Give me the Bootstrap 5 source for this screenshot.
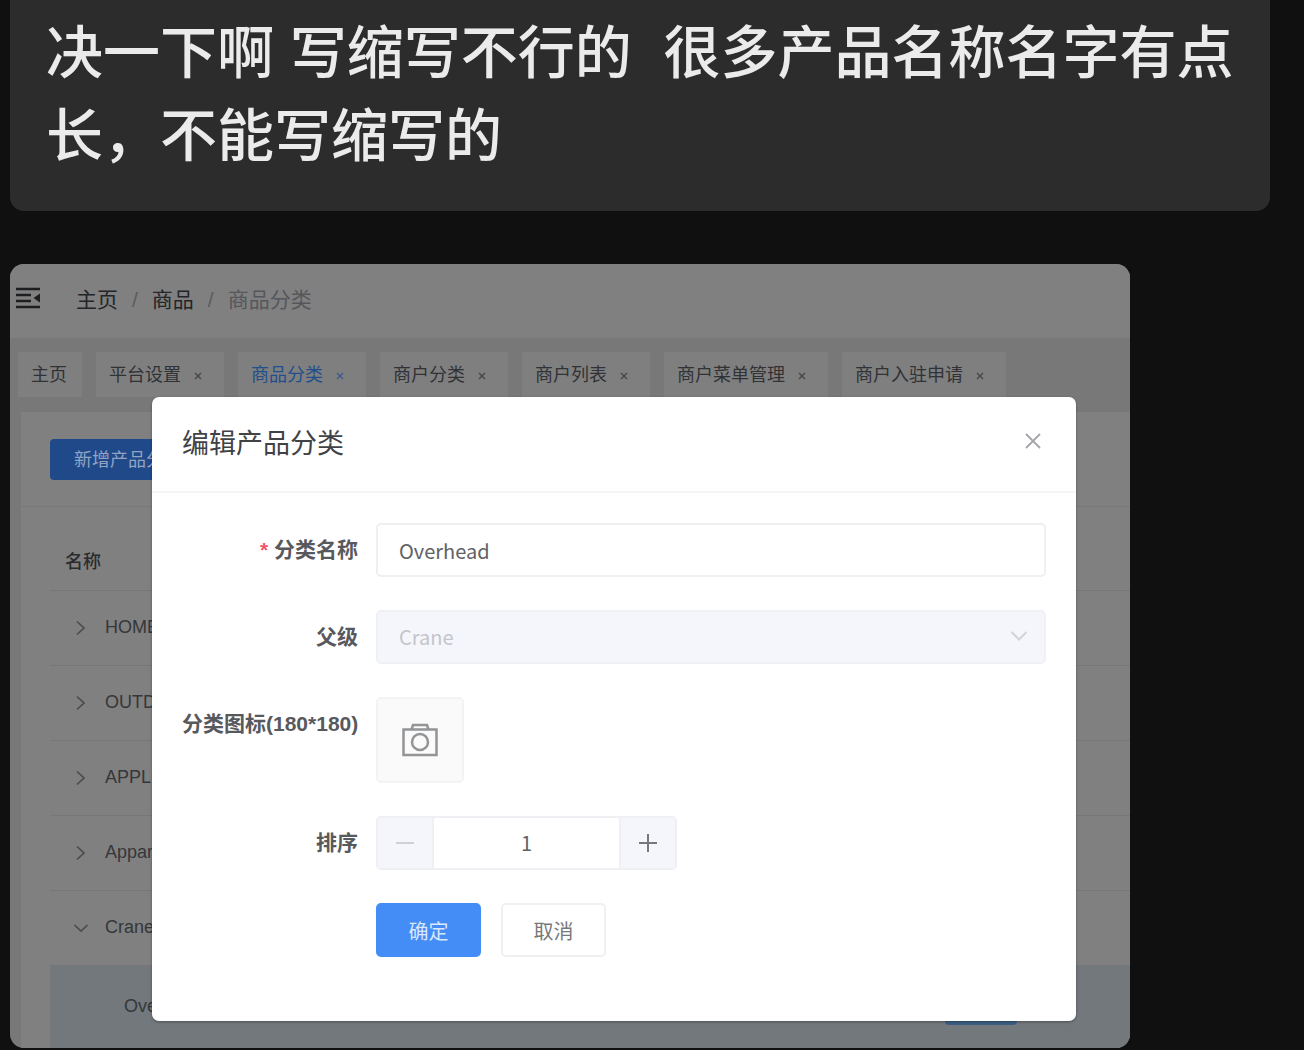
<!DOCTYPE html>
<html lang="zh-CN">
<head>
<meta charset="utf-8">
<meta name="viewport" content="width=device-width, initial-scale=1">
<title>编辑产品分类</title>
<link href="https://cdn.jsdelivr.net/npm/bootstrap@5.3.0/dist/css/bootstrap.min.css" rel="stylesheet">
<script src="https://cdn.jsdelivr.net/npm/bootstrap@5.3.0/dist/js/bootstrap.bundle.min.js"></script>
<style>
  body { background: #101010; font-family: "Liberation Sans", "Noto Sans CJK SC", sans-serif; color: #303133; }
  .chat { padding: 0 34px 2px 10px; }
  .bubble { background: #2c2c2c; color: #ebebeb; border-radius: 0 0 14px 14px; padding: 12px 36px 33px; margin-bottom: 53px; font-size: 57px; line-height: 83px; font-weight: 500; white-space: pre; }
  .shot { margin-right: 140px; border-radius: 14px; background: #787878; color: #2c2d30; overflow: hidden; }
  .shot-head { height: 74px; background: #808080; padding: 0 5px 2px; }
  .shot-head .breadcrumb { margin: 0 0 0 35px; font-size: 21px; line-height: 30px; --bs-breadcrumb-item-padding-x: 14px; --bs-breadcrumb-divider-color: #5b5c5f; }
  .shot-head a { color: #242528; text-decoration: none; }
  .shot-head .breadcrumb-item.active { color: #55575c; }
  .tabs { padding: 14px 8px 15px; gap: 14px; font-size: 18px; line-height: 27px; }
  .tab { background: #7f7f7f; height: 45px; padding: 2px 15px 0 13px; color: #303236; text-decoration: none; white-space: nowrap; }
  .tab svg { margin: 0 7px 0 13px; }
  .tab.current { color: #214f8c; }
  .panel { background: #808080; margin-left: 11px; }
  .panel-bar { padding: 27px 29px 26px; border-bottom: 1px solid #787878; }
  .btn-add { background: #20498a; color: #91a4c2; border: 0; border-radius: 4px; font-size: 18px; line-height: 27px; padding: 8px 24px 6px; }
  .panel-body { padding-left: 29px; }
  .cats { --bs-table-bg: transparent; --bs-table-color: #35373a; font-size: 18px; line-height: 27px; border-color: #777779; }
  .cats th { height: 83px; padding: 29px 15px 0; font-weight: 500; color: #2b2c2e; vertical-align: middle; }
  .cats td { height: 75px; padding: 0 23px; vertical-align: middle; }
  .cats td svg { margin-right: 16px; color: #4a4b4e; }
  .cats .picked td { background: #73787d; height: 83px; border: 0; }
  .cats .picked td:first-child { padding-left: 74px; }
  .cats td:last-child { width: 208px; }
  .btn-row { background: #3d5f83; border: 0; border-radius: 4px; width: 72px; height: 36px; }
  .dialog { position: absolute; top: 133px; left: 142px; right: 194px; background: #fff; border-radius: 7px; box-shadow: 0 1px 3px #0005; }
  .dialog-head { padding: 0 30px; height: 96px; border-bottom: 2px solid #f5f5f6; }
  .dialog-head h1 { font-size: 27px; line-height: 40px; font-weight: 400; color: #414246; margin: 0; }
  .btn-x { border: 0; background: none; padding: 3px 5px 9px; display: flex; }
  .dialog-form { padding: 30px 30px 64px; gap: 33px; font-size: 21px; }
  .line { gap: 18px; }
  .tag { width: 176px; text-align: right; font-weight: 700; color: #58595d; line-height: 54px; white-space: nowrap; flex: none; }
  .tag i { color: #f2566a; font-style: normal; }
  .latin { font-family: "Noto Sans CJK SC", sans-serif; font-size: 20px; }
  .field { height: 54px; border: 2px solid #efeff1; border-radius: 5px; padding: 0 21px; color: #606266; }
  .field:disabled { background-color: #f5f6fb; color: #c3c5ca; border-color: #f0f1f5; opacity: 1; }
  select.field { background-image: none; }
  .caret { position: absolute; right: 18px; top: 20px; }
  .upload { width: 88px; height: 86px; background: #fafafa; border: 2px solid #f3f3f4; border-radius: 5px; padding: 0; }
  .stepper { width: 301px; height: 54px; border: 2px solid #efeff4; border-radius: 5px; overflow: hidden; }
  .stepper button { width: 54px; background: #f5f6fb; border: 0; padding: 0 0 4px; }
  .stepper input { border: 0; border-left: 2px solid #efeff4; border-right: 2px solid #efeff4; text-align: center; min-width: 0; flex: 1; color: #606266; }
  .act { width: 105px; height: 54px; border-radius: 5px; font-size: 20px; padding: 3px 0 0; border: 2px solid #f0f0f1; color: #77787c; background: #fff; }
  .act.ok { background: #448cf6; border-color: #448cf6; color: #d9e8ff; }
  .spacer { width: 176px; flex: none; }
</style>
</head>
<body>
<svg width="0" height="0" class="position-absolute" aria-hidden="true">
  <symbol id="x" viewBox="0 0 8 8"><path d="M1 1l6 6M7 1L1 7" stroke="currentColor" stroke-width="1.3" opacity=".75"/></symbol>
  <symbol id="right" viewBox="0 0 16 16"><path d="M4 1.500l7 6.500-7 6.500" fill="none" stroke="currentColor" stroke-width="1.700"/></symbol>
  <symbol id="down" viewBox="0 0 16 16"><path d="M1.500 5L8 11l6.500-6" fill="none" stroke="currentColor" stroke-width="1.700"/></symbol>
</svg>
<main class="chat">
  <div class="bubble">决一下啊 写缩写不行的  很多产品名称名字有点<br>长，不能写缩写的</div>

  <div class="position-relative">
    <section class="shot">
      <header class="shot-head d-flex align-items-center">
        <svg width="26" height="24" viewBox="0 0 26 24" class="mb-1" aria-hidden="true"><path d="M1 3h24M1 9h15M1 15h15M1 21h24" stroke="#1d1e20" stroke-width="2.500"/><path d="M25 7.500v9L18.500 12z" fill="#1d1e20"/></svg>
        <nav aria-label="breadcrumb">
          <ol class="breadcrumb">
            <li class="breadcrumb-item"><a href="#">主页</a></li>
            <li class="breadcrumb-item"><a href="#">商品</a></li>
            <li class="breadcrumb-item active">商品分类</li>
          </ol>
        </nav>
      </header>
      <nav class="tabs d-flex">
        <a class="tab d-flex align-items-center" href="#">主页</a>
        <a class="tab d-flex align-items-center" href="#">平台设置<svg width="8" height="8"><use href="#x"/></svg></a>
        <a class="tab current d-flex align-items-center" href="#">商品分类<svg width="8" height="8"><use href="#x"/></svg></a>
        <a class="tab d-flex align-items-center" href="#">商户分类<svg width="8" height="8"><use href="#x"/></svg></a>
        <a class="tab d-flex align-items-center" href="#">商户列表<svg width="8" height="8"><use href="#x"/></svg></a>
        <a class="tab d-flex align-items-center" href="#">商户菜单管理<svg width="8" height="8"><use href="#x"/></svg></a>
        <a class="tab d-flex align-items-center" href="#">商户入驻申请<svg width="8" height="8"><use href="#x"/></svg></a>
      </nav>
      <div class="panel">
        <div class="panel-bar"><button class="btn-add d-block" type="button">新增产品分类</button></div>
        <div class="panel-body">
          <table class="table cats mb-0">
            <thead><tr><th colspan="2">名称</th></tr></thead>
            <tbody>
              <tr><td><svg width="16" height="16"><use href="#right"/></svg>HOME</td><td></td></tr>
              <tr><td><svg width="16" height="16"><use href="#right"/></svg>OUTD</td><td></td></tr>
              <tr><td><svg width="16" height="16"><use href="#right"/></svg>APPL</td><td></td></tr>
              <tr><td><svg width="16" height="16"><use href="#right"/></svg>Appar</td><td></td></tr>
              <tr><td><svg width="16" height="16"><use href="#down"/></svg>Crane</td><td></td></tr>
              <tr class="picked"><td>Ove</td><td><button class="btn-row d-block" type="button" aria-label="编辑"></button></td></tr>
            </tbody>
          </table>
        </div>
      </div>
    </section>

    <section class="dialog" role="dialog" aria-labelledby="dlg-title">
      <header class="dialog-head d-flex align-items-center justify-content-between">
        <h1 id="dlg-title">编辑产品分类</h1>
        <button class="btn-x" type="button" aria-label="关闭"><svg width="16" height="16" viewBox="0 0 16 16"><path d="M1 1l14 14M15 1L1 15" stroke="#a3a5a9" stroke-width="1.800"/></svg></button>
      </header>
      <form class="dialog-form d-flex flex-column">
        <div class="line d-flex">
          <label class="tag" for="name"><i>*</i> 分类名称</label>
          <input id="name" class="field latin flex-fill" type="text" value="Overhead">
        </div>
        <div class="line d-flex">
          <label class="tag" for="parent">父级</label>
          <div class="position-relative flex-fill">
            <select id="parent" class="form-select field latin" disabled><option>Crane</option></select>
            <svg class="caret" width="18" height="14" viewBox="0 0 18 14" aria-hidden="true"><path d="M1.500 2L9 9.500 16.500 2" fill="none" stroke="#d2d3d9" stroke-width="2"/></svg>
          </div>
        </div>
        <div class="line d-flex">
          <label class="tag" for="icon">分类图标(180*180)</label>
          <button id="icon" class="upload" type="button" aria-label="上传图标">
            <svg width="36" height="34" viewBox="0 0 36 34" fill="none" stroke="#939496" stroke-width="2.500"><path d="M1.500 6.500h33v25.500h-33zM9.500 6.500l1.500-4.500h14l1.500 4.500"/><circle cx="18" cy="19" r="8"/></svg>
          </button>
        </div>
        <div class="line d-flex">
          <label class="tag" for="sort">排序</label>
          <div class="stepper d-flex">
            <button type="button" disabled aria-label="减少"><svg width="18" height="18" viewBox="0 0 18 18"><path d="M0 9h18" stroke="#d0d1d6" stroke-width="2"/></svg></button>
            <input id="sort" class="latin" type="text" value="1">
            <button type="button" aria-label="增加"><svg width="18" height="18" viewBox="0 0 18 18"><path d="M0 9h18M9 0v18" stroke="#77787c" stroke-width="2"/></svg></button>
          </div>
        </div>
        <div class="line d-flex">
          <div class="spacer"></div>
          <div class="d-flex gap-3">
            <button class="act ok" type="submit">确定</button>
            <button class="act ms-1" type="button">取消</button>
          </div>
        </div>
      </form>
    </section>
  </div>
</main>
</body>
</html>
